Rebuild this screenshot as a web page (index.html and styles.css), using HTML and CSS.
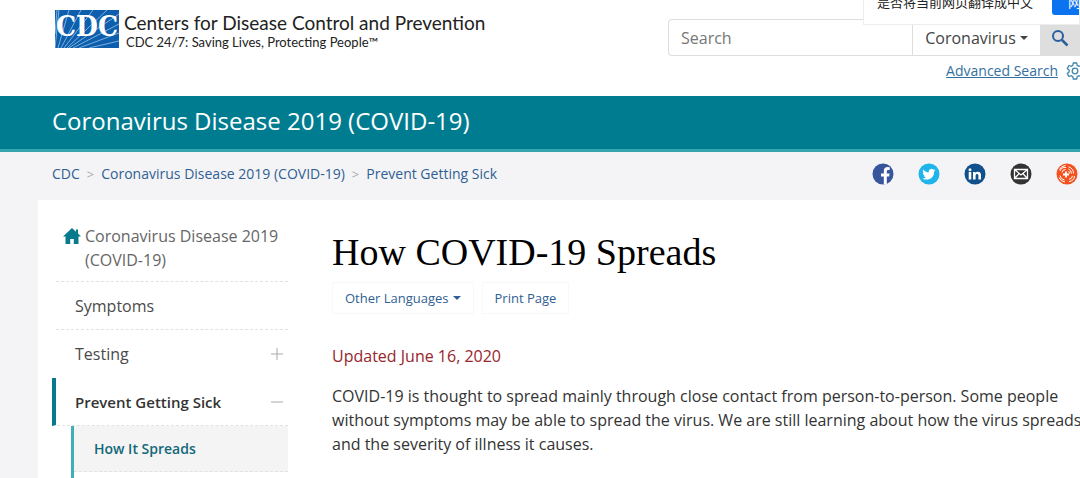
FILE: index.html
```html
<!DOCTYPE html>
<html lang="en">
<head>
<meta charset="utf-8">
<title>How COVID-19 Spreads | CDC</title>
<link rel="stylesheet" href="styles.css">
</head>
<body>
<header class="top">
  <a class="brand" href="#">
    <span class="mark">
      <svg class="rays" viewBox="0 0 64 38" preserveAspectRatio="none" aria-hidden="true">
        <path d="M0 38L4 0M3 38L14 0M6 38L26 0M9 38L38 0M12 38L52 0M14 38L64 4M18 38L64 14M24 38L64 23M34 38L64 31M0 24L2 0"/>
      </svg>
      <span class="mark-text">CDC</span>
    </span>
    <span class="brand-text">
      <span class="brand-name">Centers for Disease Control and Prevention</span>
      <span class="brand-tag">CDC 24/7: Saving Lives, Protecting People™</span>
    </span>
  </a>
  <div class="tools">
    <form class="search">
      <input class="search-input" type="search" placeholder="Search" aria-label="Search">
      <button class="search-scope" type="button">Coronavirus<span class="caret"></span></button>
      <button class="search-go" type="button" aria-label="Submit search">
        <svg width="18" height="18" viewBox="0 0 18 18" fill="none" stroke="#285f9e" stroke-width="2" aria-hidden="true"><circle cx="7" cy="7" r="5"/><path d="M11 11l5.500 5.500" stroke-width="2.500"/></svg>
      </button>
    </form>
    <div class="advanced">
      <a href="#">Advanced Search</a>
      <svg width="18" height="18" viewBox="0 0 18 18" fill="none" stroke="#3f86ad" stroke-width="1.300" stroke-linejoin="round" aria-hidden="true"><path d="M7.300 1h3.400l.5 2.400 1.500.9 2.300-.8 1.700 2.900-1.800 1.600v2l1.800 1.600-1.700 2.900-2.300-.8-1.500.9-.5 2.400H7.300l-.5-2.400-1.500-.9-2.300.8-1.700-2.900L3.100 10V8L1.300 6.400 3 3.500l2.300.8 1.500-.9z"/><circle cx="9" cy="9" r="2.800"/></svg>
    </div>
  </div>
  <div class="translate" lang="zh-CN">
    <span>是否将当前网页翻译成中文</span>
    <button class="translate-go" type="button">网页翻译</button>
  </div>
</header>
<div class="band"><a href="#">Coronavirus Disease 2019 (COVID-19)</a></div>
<div class="subbar">
  <nav class="crumbs" aria-label="Breadcrumb">
    <a href="#">CDC</a><span>&gt;</span><a href="#">Coronavirus Disease 2019 (COVID-19)</a><span>&gt;</span><a href="#">Prevent Getting Sick</a>
  </nav>
  <div class="share">
    <a href="#" aria-label="Facebook"><svg viewBox="0 0 22 22"><circle cx="11" cy="11" r="10.500" fill="#36559a"/><path fill="#fff" d="M11.800 21.400v-8H9v-3h2.800V8.100c0-2.700 1.600-4 3.900-4l2 .1v2.700h-1.400c-1.200 0-1.500.6-1.500 1.500v2h2.800l-.4 3h-2.400v7.600z"/></svg></a>
    <a href="#" aria-label="Twitter"><svg viewBox="0 0 22 22"><circle cx="11" cy="11" r="10.500" fill="#1fb4ea"/><path fill="#fff" d="M17.500 7.200l-1.500.4c.6-.3.900-.8 1.100-1.400l-1.700.6a2.700 2.700 0 0 0-4.600 2.500C8.500 9.200 6.600 8.100 5.200 6.400c-.8 1.400-.3 2.900.8 3.600l-1.200-.3c0 1.300.9 2.400 2.100 2.700l-1.200.1c.4 1.100 1.300 1.800 2.500 1.800-1.100.9-2.500 1.300-3.900 1.100 5.600 3.200 12-.3 11.800-7z"/></svg></a>
    <a href="#" aria-label="LinkedIn"><svg viewBox="0 0 22 22"><circle cx="11" cy="11" r="10.500" fill="#10508c"/><path fill="#fff" d="M4.700 9h2.600v7.500H4.700zM6 5.200a1.500 1.500 0 1 1 0 3 1.500 1.500 0 0 1 0-3zM9 9h2.500v1c1.300-2 5.500-1.600 5.500 2v4.500h-2.600v-4c0-2.200-2.800-2-2.800 0v4H9z"/></svg></a>
    <a href="#" aria-label="Email"><svg viewBox="0 0 22 22"><circle cx="11" cy="11" r="10.500" fill="#333"/><path fill="none" stroke="#fff" stroke-width="1.300" d="M4.500 6.500h13v9h-13zl6.500 5.500 6.500-5.500M4.500 15.500l4.700-5M17.500 15.500l-4.700-5"/></svg></a>
    <a href="#" aria-label="Syndicate"><svg viewBox="0 0 22 22"><circle cx="11" cy="11" r="10.500" fill="#f4511e"/><g fill="none" stroke="#fff" stroke-width="1"><path d="M4 8a5 5 0 0 1 6-3.500M6 9.500a3.500 3.500 0 0 1 3.500-3M3.500 6.500a7 7 0 0 1 6-4M12.500 6a5 5 0 0 1 3 4.500M12.500 3.800a7 7 0 0 1 5 6.700M12.500 8.200a3 3 0 0 1 1 2.500M18.500 13a6 6 0 0 1-5.500 5.500M16.500 12.800a4 4 0 0 1-3.500 3.500M4 12.500a5 5 0 0 0 4.500 4.500M3 14.500a7 7 0 0 0 6 4.500"/><path d="M10 8.500v6M7 11.500h6" stroke-width="1.800"/></g></svg></a>
  </div>
</div>
<div class="page">
  <nav class="side" aria-label="Section">
    <a class="item home" href="#"><svg width="18" height="16" viewBox="0 0 18 16" fill="#087a8b" aria-hidden="true"><path d="M9 0L0 8.500h2.500V16h4.700v-5h3.600v5h4.700V8.500H18l-3-2.900V1.500h-2v2.200z"/></svg><span>Coronavirus Disease 2019 (COVID-19)</span></a>
    <a class="item" href="#">Symptoms</a>
    <a class="item plain" href="#">Testing<svg class="sign" viewBox="0 0 12 12" aria-hidden="true"><path d="M0 6h12M6 0v12"/></svg></a>
    <a class="item active" href="#">Prevent Getting Sick<svg class="sign" viewBox="0 0 12 12" aria-hidden="true"><path d="M0 6h12"/></svg></a>
    <div class="sub">
      <a class="sub-item current" href="#">How It Spreads</a>
      <a class="sub-item" href="#" aria-label="More"></a>
    </div>
  </nav>
  <main class="content">
    <h1>How COVID-19 Spreads</h1>
    <div class="actions">
      <button type="button">Other Languages<span class="caret"></span></button>
      <button type="button">Print Page</button>
    </div>
    <p class="updated">Updated June 16, 2020</p>
    <p>COVID-19 is thought to spread mainly through close contact from person-to-person. Some people without symptoms may be able to spread the virus. We are still learning about how the virus spreads and the severity of illness it causes.</p>
  </main>
</div>
</body>
</html>
```

FILE: styles.css
```css
* { box-sizing: border-box; }
html { height: 100%; }
body {
  display: flex;
  flex-direction: column;
  height: 100%;
  margin: 0;
  overflow: hidden;
  background: #f4f4f6;
  color: #333;
  font: 16px/24px "Open Sans", "Noto Sans", sans-serif;
}
a { color: inherit; text-decoration: none; }
button, input { font: inherit; }
.top, .band, .subbar { flex: none; }

.top {
  position: relative;
  display: flex;
  justify-content: space-between;
  height: 96px;
  padding-left: 55px;
  overflow: hidden;
  background: #fefffe;
}
.brand { display: flex; gap: 5px; padding-top: 10px; color: #222; }
.mark {
  display: grid;
  width: 64px;
  height: 38px;
  overflow: hidden;
  background: #0d5fae;
}
.rays, .mark-text { grid-area: 1 / 1; }
.rays { width: 64px; height: 38px; fill: none; stroke: #7fb0dc; stroke-width: 1; }
.mark-text {
  z-index: 1;
  color: #fff;
  font: bold 28px/33px "DejaVu Serif Condensed", "DejaVu Serif", serif;
  text-align: center;
}
.brand-text { display: flex; flex-direction: column; font-family: Lato, sans-serif; }
.brand-name { font-size: 19px; line-height: 26px; }
.brand-tag { padding-left: 2px; font-size: 13px; line-height: 12px; }

.tools { display: flex; flex-direction: column; gap: 4px; width: 412px; padding-top: 19px; }
.search {
  display: flex;
  height: 37px;
  border: 1px solid #ddd;
  border-right: 0;
  border-radius: 4px 0 0 4px;
}
.search-input {
  flex: 1;
  min-width: 0;
  padding: 0 12px;
  border: 0;
  background: none;
}
.search-input::placeholder { color: #777; }
.search-scope {
  width: 128px;
  padding: 0;
  border: 0;
  border-left: 1px solid #ddd;
  background: none;
  color: #444;
}
.search-go { display: grid; place-items: center; width: 40px; padding: 0; border: 0; background: #dedede; }
.caret {
  display: inline-block;
  margin-left: 4px;
  border: 4px solid transparent;
  border-top-color: currentColor;
  border-bottom: 0;
  vertical-align: 3px;
}
.search-scope .caret { vertical-align: 4px; }
.advanced {
  display: flex;
  align-items: center;
  justify-content: flex-end;
  gap: 8px;
  margin-right: -4px;
  line-height: 22px;
  font-size: 14px;
  color: #34709e;
}
.advanced a { text-decoration: underline; }
.translate {
  position: absolute;
  top: -13px;
  right: 0;
  display: flex;
  justify-content: space-between;
  width: 217px;
  height: 38px;
  padding-left: 13px;
  border: 1px solid #eee;
  background: #fff;
  color: #222;
  font: 13px/28px "Noto Sans CJK SC", sans-serif;
  white-space: nowrap;
}
.translate-go {
  width: 27px;
  height: 27px;
  padding: 0 0 0 16px;
  overflow: hidden;
  border: 0;
  border-radius: 3px 0 0 3px;
  background: #0b72f0;
  color: #fff;
}

.band {
  padding: 8px 52px 11px;
  border-bottom: 3px solid #35a5ae;
  background: #007c91;
  color: #fff;
  font-size: 24px;
  line-height: 34px;
}
.subbar {
  display: flex;
  align-items: center;
  justify-content: space-between;
  height: 48px;
  padding: 0 2px 4px 52px;
}
.crumbs {
  display: flex;
  gap: 7px;
  color: #305f93;
  font-size: 14px;
}
.crumbs span { color: #aaa; font-size: 13px; }
.share { display: flex; gap: 24px; }
.share a, .share svg { display: block; width: 22px; height: 22px; }

.page {
  display: flex;
  flex: 1;
  min-height: 0;
  gap: 44px;
  margin-left: 38px;
  padding-left: 14px;
  overflow: hidden;
  background: #fff;
}
.side { flex: none; width: 236px; padding-top: 12px; }
.item {
  display: flex;
  align-items: center;
  justify-content: space-between;
  height: 48px;
  margin-left: 4px;
  padding: 0 5px 0 19px;
  border-bottom: 1px dashed #e2e2e2;
  color: #4a4a4a;
}
.home {
  align-items: flex-start;
  justify-content: flex-start;
  gap: 4px;
  height: auto;
  padding: 12px 0 9px 7px;
  color: #666;
}
.home svg { flex: none; margin-top: 4px; }
.plain { border-bottom-color: transparent; }
.active {
  margin-left: 0;
  border-left: 4px solid #087a8b;
  color: #333;
  font-size: 15px;
  font-weight: 600;
}
.sign { width: 12px; height: 12px; fill: none; stroke: #aaa; stroke-width: 1; }
.sub { margin-left: 19px; border-left: 3px solid #40aebb; }
.sub-item {
  display: block;
  height: 46px;
  padding: 11px 20px;
  border-bottom: 1px dashed #e2e2e2;
  color: #126879;
  font-size: 14px;
  font-weight: 600;
}
.current { background: #f4f4f4; }

.content {
  flex: 1;
  min-width: 0;
  padding-top: 28px;
}
h1 {
  margin: 0;
  color: #000;
  font: 38px/48px "Liberation Serif", serif;
}
.actions { display: flex; gap: 8px; margin-top: 6px; }
.actions button {
  padding: 3px 12px;
  border: 1px solid #f8f8f8;
  background: #fff;
  color: #305f93;
  font-size: 13px;
}
.content p { margin: 0 -4px 0 0; }
.content .updated { margin: 30px 0 16px; color: #97252b; }
```
